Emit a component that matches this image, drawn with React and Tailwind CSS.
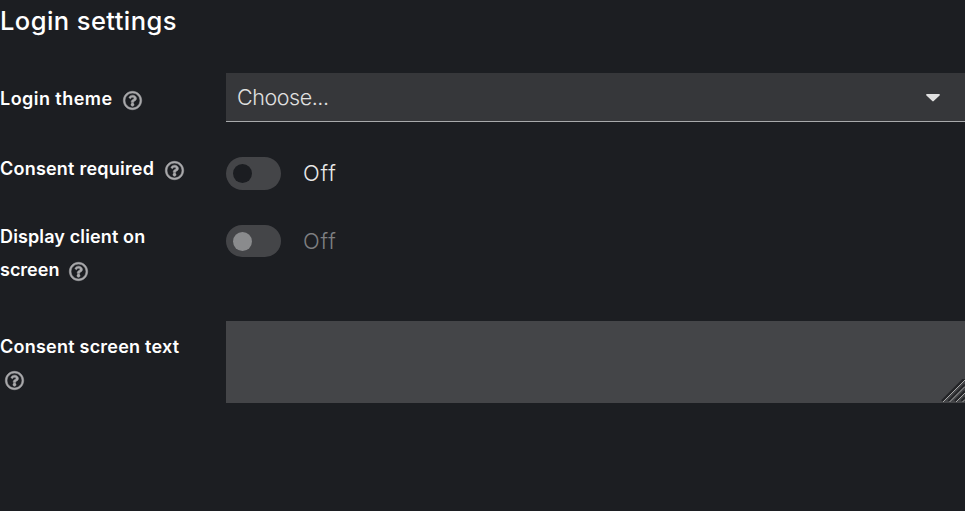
import { FaRegQuestionCircle } from "react-icons/fa";

function Help({ className }) {
  return (
    <button type="button" aria-label="Help" className={`block self-start text-[#a9a9ab] ${className}`}>
      <FaRegQuestionCircle className="block size-[19px] overflow-visible stroke-current [stroke-width:14]" />
    </button>
  );
}

function Row({ className, label, children }) {
  return (
    <div className={`flex items-start ${className}`}>
      <div className="w-[226px] shrink-0 text-[18px] leading-[33px] font-semibold whitespace-nowrap text-white">
        {label}
      </div>
      {children}
    </div>
  );
}

function Toggle({ disabled }) {
  return (
    <div className={`flex items-center ${disabled ? "h-8" : "h-[33px]"}`}>
      <span className="flex h-full w-[55px] items-center rounded-full bg-[#444548] pl-[7px]">
        <span className={`size-[19px] rounded-full ${disabled ? "bg-[#8a8b8d]" : "bg-[#1b1d21]"}`} />
      </span>
      <span className={`-mt-px ml-[22px] text-[22px] leading-8 font-light tracking-[0.8px] ${disabled ? "text-[#7e7f81]" : "text-[#e8e8e8]"}`}>Off</span>
    </div>
  );
}

export default function App() {
  return (
    <main className="flex h-[511px] w-[965px] flex-col overflow-hidden bg-[#1c1e22] font-['Inter',sans-serif]">
      <h1 className="h-[73px] text-[25.5px] leading-[42px] font-medium text-white">
        <span className="tracking-[0.43px]">Login settings</span>
      </h1>
      <Row
        className="h-[84px]"
        label={
          <div className="flex pt-[9px]">
            <span className="w-[113px] tracking-[0.45px]">Login theme</span>
            <Help className="mt-[9px] ml-[10px]" />
          </div>
        }
      >
        <div className="flex h-[49px] flex-1 items-center justify-between border-b border-[#a8aaac] bg-[#36373a] pr-[25px] pl-[11px] text-[21.5px] text-[#e0e0e0]">
          <span className="font-light tracking-[-0.45px]">Choose...</span>
          <svg viewBox="0 0 14 8" className="h-2 w-[14px] translate-y-px fill-current">
            <path d="M1 0h12c.9 0 1.200.8.6 1.400L7.700 7.100a1 1 0 0 1-1.400 0L.4 1.400C-.2.8.1 0 1 0Z" />
          </svg>
        </div>
      </Row>
      <Row
        className="h-[68px]"
        label={
          <div className="-mt-[5px] flex">
            <span className="w-[155px] tracking-[0.22px]">Consent required</span>
            <Help className="mt-[9px] ml-[10px]" />
          </div>
        }
      >
        <Toggle />
      </Row>
      <Row
        className="h-24"
        label={
          <div className="-mt-[5px]">
            <div className="tracking-[0.13px]">Display client on</div>
            <div className="flex">
              <span className="w-[59px]">screen</span>
              <Help className="mt-[9px] ml-[10px]" />
            </div>
          </div>
        }
      >
        <Toggle disabled />
      </Row>
      <Row
        className="h-[82px]"
        label={
          <div className="pt-[9px]">
            <div className="tracking-[0.23px]">Consent screen text</div>
            <Help className="mt-[8px] ml-[5px]" />
          </div>
        }
      >
        <div className="flex h-[82px] flex-1 items-end justify-end bg-[#444548]">
          <svg viewBox="0 0 24 24" className="size-6" fill="none">
            <path d="M1 22 24 -1M7.500 22 24 5.500M14 22 24 12M20.500 22 24 18.500" stroke="#242528" strokeWidth="2.400" />
            <path d="M2 23 24 1M8.500 23 24 7.500M15 23 24 14M21.500 23l2.500-2.500" stroke="#a8a8a8" strokeWidth="1" />
          </svg>
        </div>
      </Row>
    </main>
  );
}
